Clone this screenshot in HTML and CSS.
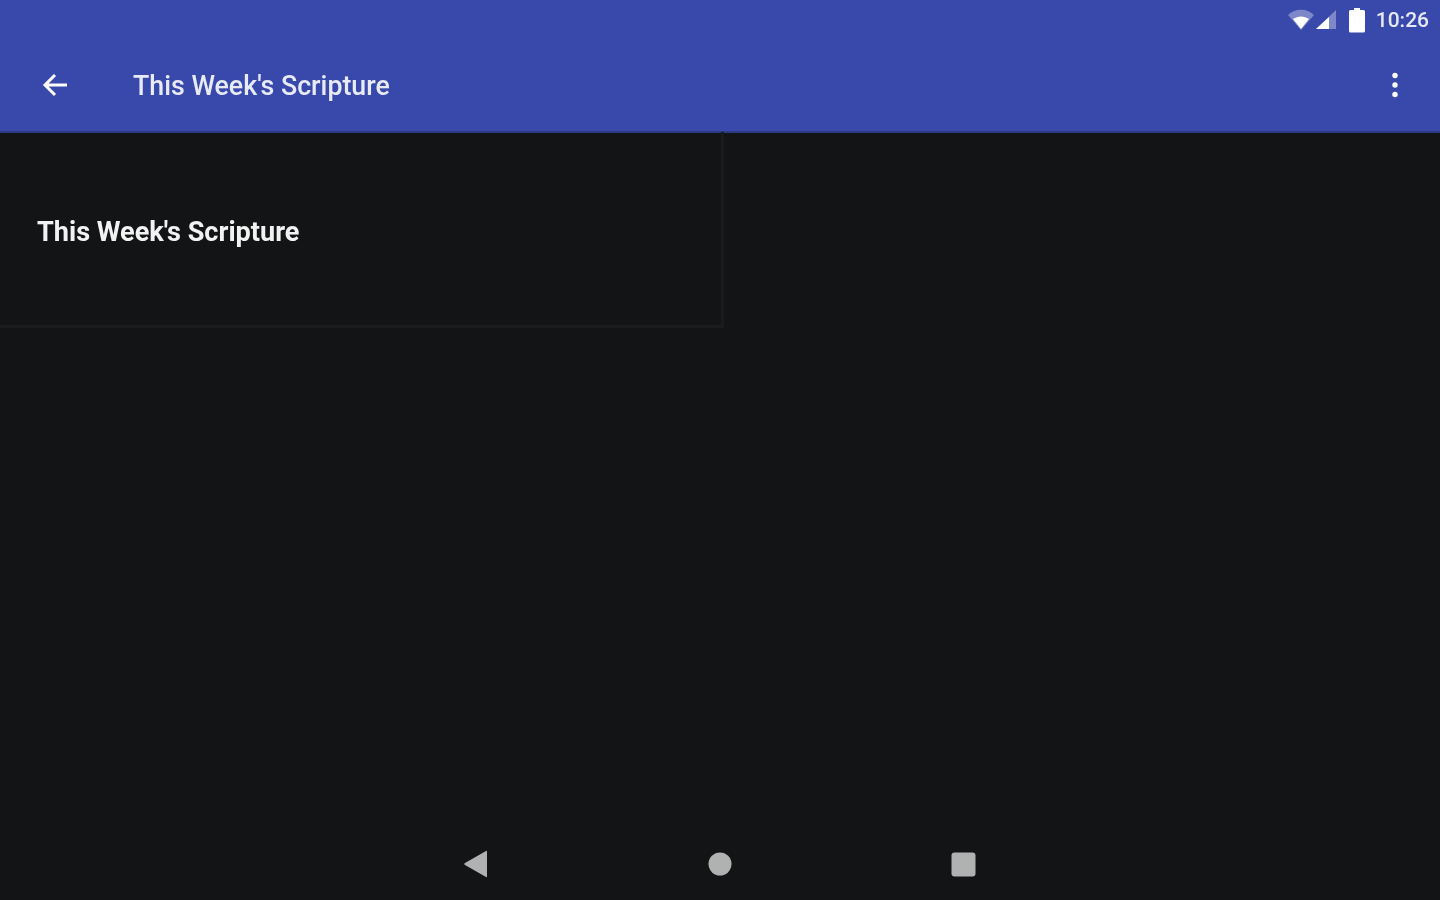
FILE: index.html
```html
<!DOCTYPE html>
<html lang="en">
<head>
<meta charset="utf-8">
<title>This Week's Scripture</title>
<link rel="stylesheet" href="styles.css">
</head>
<body>
<div class="screen">
  <header class="appbar">
    <div class="status">
      <svg class="ic-wifi" width="26" height="22" viewBox="0 0 26 22"><path class="dim" d="M0 6C7-1 19-1 26 6L13 21Z"/><path class="solid" d="M5 10C10 6.500 16 6.500 21 10L13 20Z"/></svg>
      <svg class="ic-signal" width="22" height="22" viewBox="0 0 22 22"><path class="dim" d="M21 1V20H1Z"/><path class="solid" d="M14 8V20H1Z"/></svg>
      <svg class="ic-battery" width="16" height="26" viewBox="0 0 16 26"><path class="solid" d="M5 1H11V3H14.500Q16 3 16 4.500V24Q16 25.500 14.500 25.500H1.500Q0 25.500 0 24V4.500Q0 3 1.500 3H5Z"/></svg>
      <span class="clock">10:26</span>
    </div>
    <div class="toolbar">
      <svg class="ic-back" width="28" height="26" viewBox="0 0 28 26"><path d="M26 13H4M14 3L4 13L14 23"/></svg>
      <h1 class="title">This Week's Scripture</h1>
      <svg class="ic-more" width="8" height="26" viewBox="0 0 8 26"><circle cx="4" cy="3.500" r="2.700"/><circle cx="4" cy="13" r="2.700"/><circle cx="4" cy="22.500" r="2.700"/></svg>
    </div>
  </header>
  <main class="content">
    <section class="card"><h2 class="card-title">This Week's Scripture</h2></section>
  </main>
  <nav class="navbar">
    <svg width="26" height="28" viewBox="0 0 26 28"><path class="nav-shape" d="M24 1.500V26.500Q24 27.500 23 27L2 15Q0.500 14 2 13L23 1Q24 0.500 24 1.500Z"/></svg>
    <svg width="24" height="24" viewBox="0 0 24 24"><circle class="nav-shape" cx="12" cy="12" r="11.500"/></svg>
    <svg width="25" height="25" viewBox="0 0 25 25"><rect class="nav-shape" x="0.500" y="0.500" width="24" height="24" rx="3"/></svg>
  </nav>
</div>
</body>
</html>
```
FILE: styles.css
```css
* { box-sizing: border-box; }
html, body { margin: 0; height: 100%; }
body { background: #121416; font-family: Roboto, "Liberation Sans", sans-serif; }
.screen { height: 900px; display: flex; flex-direction: column; overflow: hidden; }
.appbar { height: 133px; flex: none; background: #3949ab; border-bottom: 2px solid #2d3a85; display: flex; flex-direction: column; }
.status { height: 38px; padding: 1px 11px 0 0; display: flex; justify-content: flex-end; align-items: center; color: #e6e8f5; }
.status > * { flex: none; filter: blur(.6px); }
.dim { fill: #fff; opacity: .35; }
.solid { fill: #fff; }
.ic-wifi { margin-right: 1px; }
.ic-signal { margin-right: 12px; }
.ic-battery { margin-right: 11px; }
.clock { font-size: 21px; font-weight: 500; line-height: 26px; }
.toolbar { flex: 1; display: flex; align-items: center; padding: 0 41px 0 41px; color: #e8eaf6; }
.toolbar > * { filter: blur(.6px); }
.ic-back { flex: none; fill: none; stroke: #fff; stroke-width: 3; margin-right: 64px; }
.title { flex: 1; margin: 2px 0 0; font-size: 26.750px; font-weight: 500; line-height: 36px; }
.ic-more { flex: none; fill: #fff; }
.content { flex: 1; min-height: 0; }
.card { width: 724px; height: 196px; margin-top: -1px; padding: 0 0 0 37px; display: flex; align-items: center; border-right: 3px solid #1a1b1d; border-bottom: 3px solid #1a1b1d; }
.card-title { margin: 6px 0 0; font-size: 27.100px; font-weight: 700; line-height: 36px; color: #f2f2f2; filter: blur(.6px); }
.navbar { height: 72px; flex: none; display: flex; justify-content: center; align-items: center; gap: 219px; padding: 0 1px 0 0; }
.navbar svg { filter: blur(.4px); }
.nav-shape { fill: #b0b2b2; }
```
